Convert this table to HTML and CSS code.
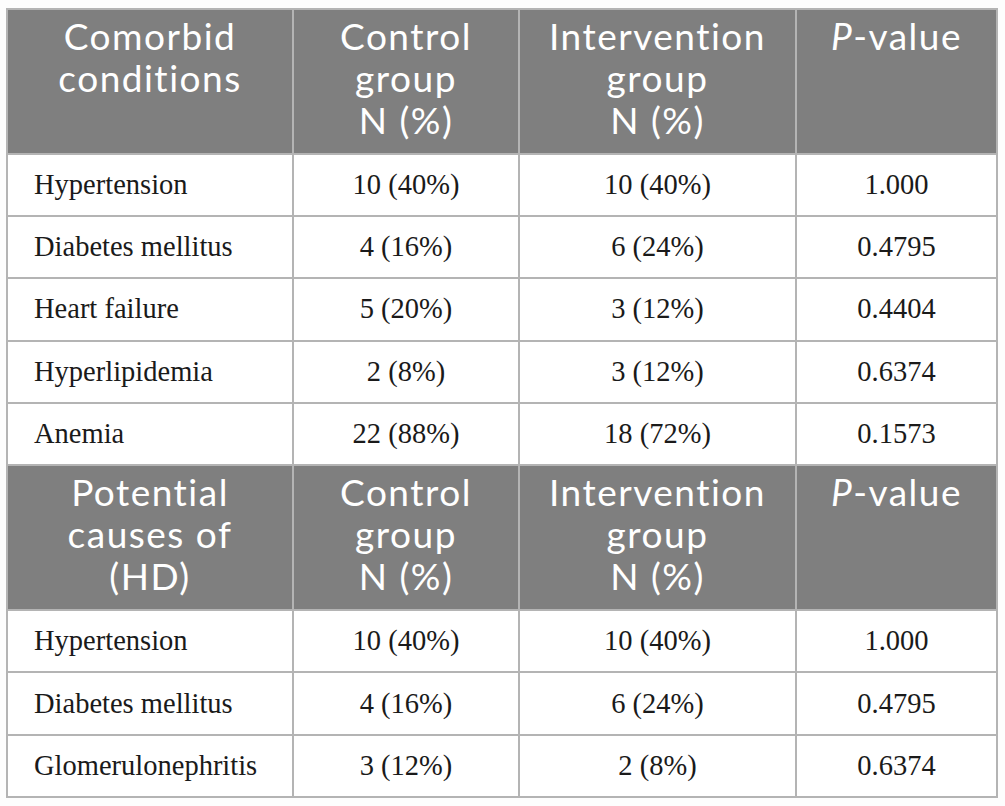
FILE: index.html
```html
<!DOCTYPE html>
<html lang="en">
<head>
<meta charset="utf-8">
<title>Comorbid conditions</title>
<link rel="stylesheet" href="styles.css">
</head>
<body>
<table class="data">
  <colgroup>
    <col class="c1"><col class="c2"><col class="c3"><col class="c4">
  </colgroup>
  <tr class="head">
    <th>Comorbid<br>conditions</th>
    <th>Control<br>group<br>N (%)</th>
    <th>Intervention<br>group<br>N (%)</th>
    <th><i>P</i>-value</th>
  </tr>
  <tr><td class="label">Hypertension</td><td>10 (40%)</td><td>10 (40%)</td><td>1.000</td></tr>
  <tr><td class="label">Diabetes mellitus</td><td>4 (16%)</td><td>6 (24%)</td><td>0.4795</td></tr>
  <tr><td class="label">Heart failure</td><td>5 (20%)</td><td>3 (12%)</td><td>0.4404</td></tr>
  <tr><td class="label">Hyperlipidemia</td><td>2 (8%)</td><td>3 (12%)</td><td>0.6374</td></tr>
  <tr><td class="label">Anemia</td><td>22 (88%)</td><td>18 (72%)</td><td>0.1573</td></tr>
  <tr class="head">
    <th>Potential<br>causes of<br>(HD)</th>
    <th>Control<br>group<br>N (%)</th>
    <th>Intervention<br>group<br>N (%)</th>
    <th><i>P</i>-value</th>
  </tr>
  <tr><td class="label">Hypertension</td><td>10 (40%)</td><td>10 (40%)</td><td>1.000</td></tr>
  <tr><td class="label">Diabetes mellitus</td><td>4 (16%)</td><td>6 (24%)</td><td>0.4795</td></tr>
  <tr><td class="label">Glomerulonephritis</td><td>3 (12%)</td><td>2 (8%)</td><td>0.6374</td></tr>
</table>
</body>
</html>
```

FILE: styles.css
```css
html, body {
  margin: 0;
  padding: 0;
  background: #fdfdfd;
}
body {
  padding: 8px 10px 0 6px;
}
.data {
  width: 990px;
  border-collapse: collapse;
  table-layout: fixed;
  border: 2px solid #ababab;
}
.c1 { width: 286px; }
.c2 { width: 226px; }
.c3 { width: 277px; }
.c4 { width: 201px; }
.data th, .data td {
  border: 2px solid #b4b4b4;
}
.head th {
  background: #7f7f7f;
  color: #ffffff;
  font-family: "Lato", "DejaVu Sans", sans-serif;
  font-weight: 400;
  font-size: 37px;
  line-height: 42px;
  text-align: center;
  vertical-align: top;
  padding: 5px 4px 11.5px;
  letter-spacing: 1.5px;
}
.head th i {
  font-style: italic;
}
.data td {
  background: #ffffff;
  color: #1a1a1a;
  font-family: "Liberation Serif", "Times New Roman", serif;
  font-size: 28.5px;
  height: 60.4px;
  padding: 0 6px;
  text-align: center;
  vertical-align: middle;
}
.data td.label {
  text-align: left;
  padding-left: 26px;
}
```
